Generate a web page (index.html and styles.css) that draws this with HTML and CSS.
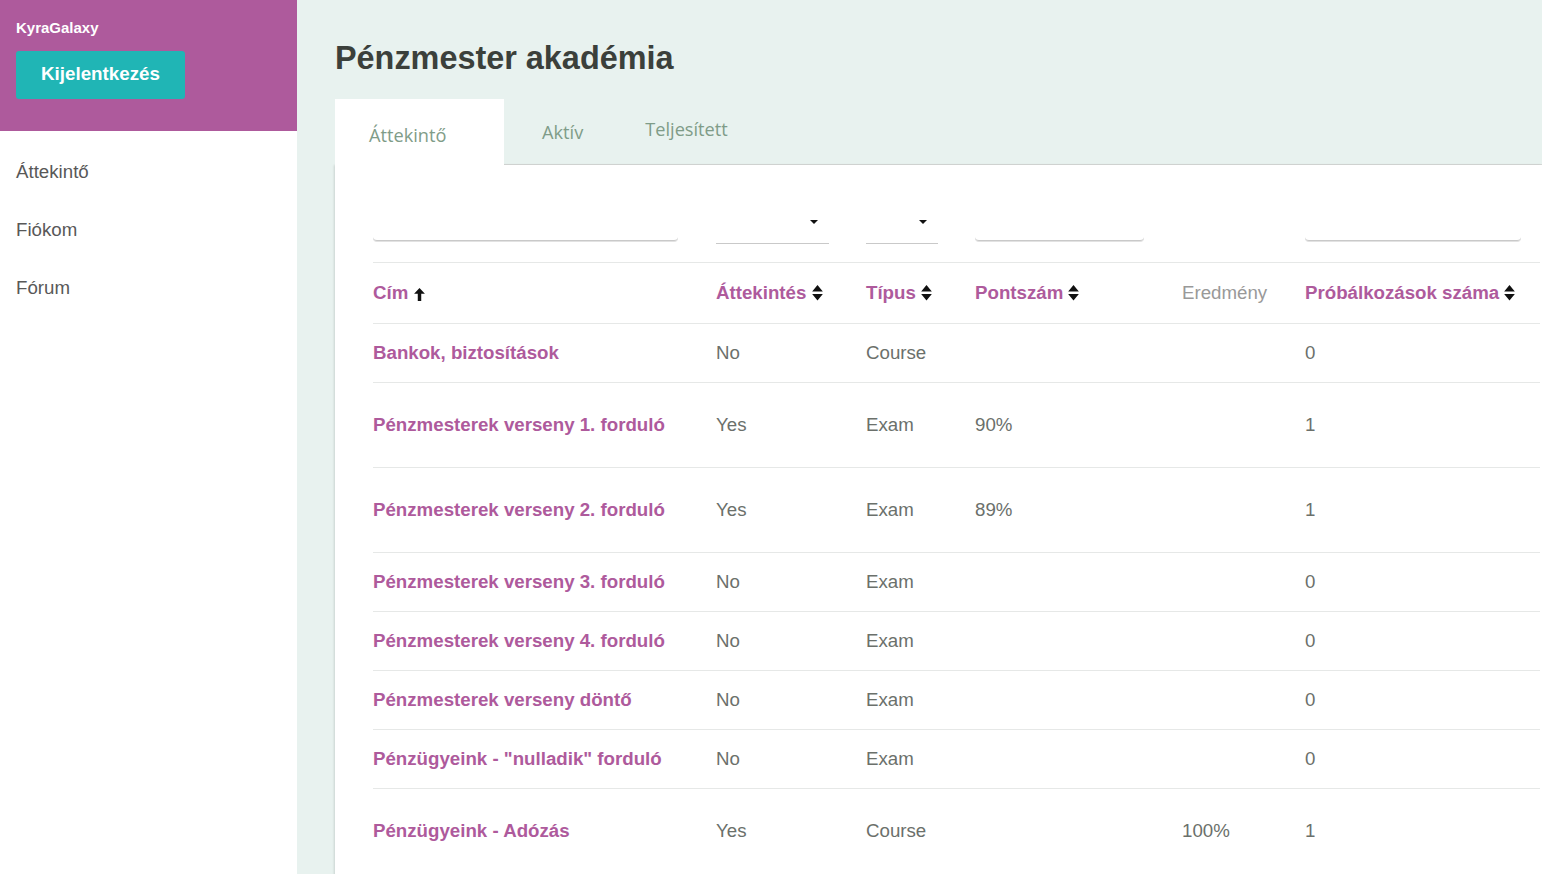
FILE: index.html
```html
<!DOCTYPE html>
<html lang="hu">
<head>
<meta charset="utf-8">
<title>Pénzmester akadémia</title>
<link rel="stylesheet" href="styles.css">
</head>
<body>
<div class="layout">
  <aside class="sidebar">
    <div class="brand">
      <div class="brand-name">KyraGalaxy</div>
      <button class="logout">Kijelentkezés</button>
    </div>
    <nav class="nav">
      <a class="nav-item">Áttekintő</a>
      <a class="nav-item">Fiókom</a>
      <a class="nav-item">Fórum</a>
    </nav>
  </aside>
  <main class="main">
    <h1 class="title">Pénzmester akadémia</h1>
    <div class="tabs">
      <div class="tab active">Áttekintő</div>
      <div class="tab tab-aktiv">Aktív</div>
      <div class="tab tab-telj">Teljesített</div>
    </div>
    <section class="panel">
      <table class="grid">
        <colgroup>
          <col class="c1"><col class="c2"><col class="c3"><col class="c4"><col class="c5"><col class="c6">
        </colgroup>
        <thead>
          <tr class="filters">
            <td><input class="f-input f-title" type="text"></td>
            <td><div class="f-select f-sel1"><span class="caret"></span></div></td>
            <td><div class="f-select f-sel2"><span class="caret"></span></div></td>
            <td><input class="f-input f-score" type="text"></td>
            <td></td>
            <td><input class="f-input f-tries" type="text"></td>
          </tr>
          <tr class="head">
            <th class="sortable">Cím <svg class="ico-up" viewBox="0 0 10 12" width="11" height="13"><path d="M5 0 L10 5.2 L6.6 5.2 L6.6 12 L3.4 12 L3.4 5.2 L0 5.2 Z"/></svg></th>
            <th class="sortable">Áttekintés <svg class="ico-sort" viewBox="0 0 10 15" width="11" height="16"><path d="M5 0 L10 6 L0 6 Z M0 8.5 L10 8.5 L5 14.5 Z"/></svg></th>
            <th class="sortable">Típus <svg class="ico-sort" viewBox="0 0 10 15" width="11" height="16"><path d="M5 0 L10 6 L0 6 Z M0 8.5 L10 8.5 L5 14.5 Z"/></svg></th>
            <th class="sortable">Pontszám <svg class="ico-sort" viewBox="0 0 10 15" width="11" height="16"><path d="M5 0 L10 6 L0 6 Z M0 8.5 L10 8.5 L5 14.5 Z"/></svg></th>
            <th class="plain">Eredmény</th>
            <th class="sortable">Próbálkozások száma <svg class="ico-sort" viewBox="0 0 10 15" width="11" height="16"><path d="M5 0 L10 6 L0 6 Z M0 8.5 L10 8.5 L5 14.5 Z"/></svg></th>
          </tr>
        </thead>
        <tbody>
          <tr><td class="name">Bankok, biztosítások</td><td>No</td><td>Course</td><td></td><td></td><td>0</td></tr>
          <tr class="tall"><td class="name">Pénzmesterek verseny 1. forduló</td><td>Yes</td><td>Exam</td><td>90%</td><td></td><td>1</td></tr>
          <tr class="tall"><td class="name">Pénzmesterek verseny 2. forduló</td><td>Yes</td><td>Exam</td><td>89%</td><td></td><td>1</td></tr>
          <tr><td class="name">Pénzmesterek verseny 3. forduló</td><td>No</td><td>Exam</td><td></td><td></td><td>0</td></tr>
          <tr><td class="name">Pénzmesterek verseny 4. forduló</td><td>No</td><td>Exam</td><td></td><td></td><td>0</td></tr>
          <tr><td class="name">Pénzmesterek verseny döntő</td><td>No</td><td>Exam</td><td></td><td></td><td>0</td></tr>
          <tr><td class="name">Pénzügyeink - "nulladik" forduló</td><td>No</td><td>Exam</td><td></td><td></td><td>0</td></tr>
          <tr class="tall"><td class="name">Pénzügyeink - Adózás</td><td>Yes</td><td>Course</td><td></td><td>100%</td><td>1</td></tr>
        </tbody>
      </table>
    </section>
  </main>
</div>
</body>
</html>
```

FILE: styles.css
```css
* { box-sizing: border-box; }
html, body { margin: 0; padding: 0; height: 100%; overflow: hidden; }
body {
  font-family: "Liberation Sans", Arial, sans-serif;
  background: #e8f2ef;
  color: #666b66;
}
.layout { display: flex; min-height: 874px; }

.sidebar { width: 297px; flex: 0 0 297px; background: #fff; }
.brand {
  background: #ae5a9c;
  height: 131px;
  padding: 19px 16px 0;
}
.brand-name { color: #fff; font-weight: bold; font-size: 15px; line-height: 18px; }
.logout {
  margin-top: 14px;
  width: 169px;
  height: 48px;
  border: 0;
  border-radius: 3px;
  background: #20b5b5;
  color: #fff;
  font-family: "Liberation Sans", Arial, sans-serif;
  font-weight: bold;
  font-size: 18.8px;
  padding: 0 0 2px;
}
.nav { display: flex; flex-direction: column; padding-top: 29px; }
.nav-item {
  display: block;
  padding-left: 16px;
  height: 58px;
  font-size: 18.7px;
  line-height: 24px;
  color: #585858;
}

.main { flex: 1; padding: 38px 2px 0 38px; min-width: 0; }
.title {
  margin: 0;
  font-size: 32.4px;
  line-height: 40px;
  font-weight: bold;
  color: #3b403b;
}
.tabs {
  display: flex;
  margin-top: 21px;
  margin-right: -2px;
  height: 66px;
  border-bottom: 1px solid #d8dbd9;
}
.tab {
  font-family: "Open Sans", "Liberation Sans", sans-serif;
  font-size: 18.2px;
  color: #7f9c88;
  line-height: 20px;
}
.tab.active {
  width: 169px;
  background: #fff;
  padding: 26px 0 0 34px;
  height: 66px;
  margin-bottom: -1px;
}
.tab-aktiv { padding: 23px 0 0 38px; }
.tab-telj { padding: 20px 0 0 62px; }

.panel {
  background: #fff;
  margin-right: -2px;
  padding: 0 2px 0 38px;
  height: 720px;
  box-shadow: -1px 0 2px rgba(0,0,0,0.12);
}
.grid { width: 100%; border-collapse: collapse; table-layout: fixed; }
.c1 { width: 343px; }
.c2 { width: 150px; }
.c3 { width: 109px; }
.c4 { width: 207px; }
.c5 { width: 123px; }
.c6 { width: auto; }

.grid td, .grid th {
  padding: 0;
  text-align: left;
  vertical-align: middle;
  font-size: 18.7px;
  line-height: 22px;
}
.filters td { height: 97px; vertical-align: top; border-bottom: 1px solid #e6e8e7; }
.f-input {
  display: block;
  margin-top: 63px;
  height: 13px;
  border: 0;
  border-bottom: 1px solid #c9c9c9;
  border-radius: 0 0 4px 4px;
  box-shadow: 0 1px 0 #e2e2e2;
  background: transparent;
  outline: none;
  padding: 0;
}
.f-title { width: 305px; }
.f-score { width: 169px; }
.f-tries { width: 216px; }
.f-select {
  position: relative;
  margin-top: 52px;
  height: 27px;
  border-bottom: 1px solid #c9c9c9;
}
.f-sel1 { width: 113px; }
.f-sel2 { width: 72px; }
.caret {
  position: absolute;
  top: 3px;
  right: 11px;
  width: 0; height: 0;
  border-left: 4px solid transparent;
  border-right: 4px solid transparent;
  border-top: 4px solid #111;
}

.head th { height: 61px; border-bottom: 1px solid #e6e8e7; padding-top: 0; }
.sortable { color: #ae5a9c; font-weight: bold; white-space: nowrap; }
.plain { color: #999; font-weight: normal; }
.ico-up, .ico-sort { fill: #111; vertical-align: -2px; margin-left: 0; }

tbody td { height: 59px; border-bottom: 1px solid #e6e8e7; color: #6b706b; }
tbody tr.tall td { height: 85px; }
tbody tr:last-child td { border-bottom: 0; }
tbody td.name { color: #ae5a9c; font-weight: bold; }
```
